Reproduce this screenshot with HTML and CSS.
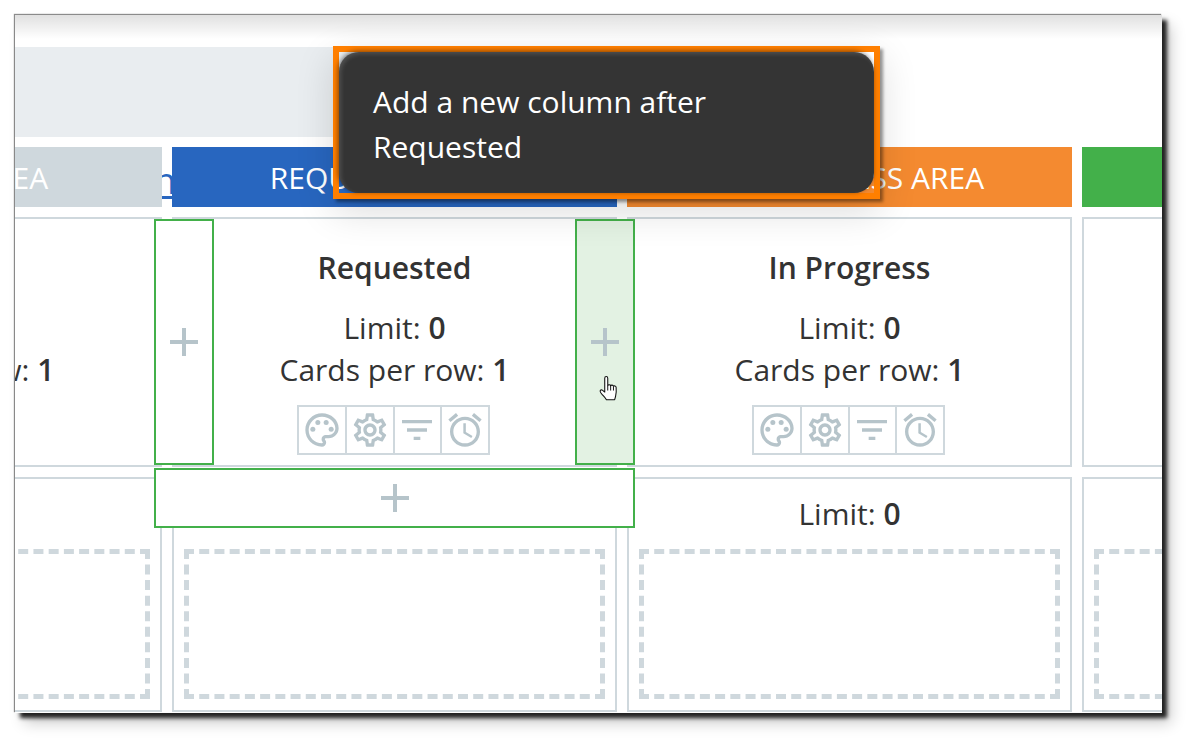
FILE: index.html
```html
<!DOCTYPE html>
<html lang="en">
<head>
<meta charset="utf-8">
<title>Board editor</title>
<link rel="stylesheet" href="styles.css">
</head>
<body>
<svg class="defs" width="0" height="0" aria-hidden="true">
  <symbol id="i-palette" viewBox="0 0 24 24"><path d="M12 22C6.49 22 2 17.51 2 12S6.49 2 12 2s10 4.04 10 9c0 3.31-2.69 6-6 6h-1.77c-.28 0-.5.22-.5.5 0 .12.05.23.13.33.41.47.64 1.06.64 1.67A2.5 2.5 0 0 1 12 22zm0-18c-4.41 0-8 3.59-8 8s3.59 8 8 8c.28 0 .5-.22.5-.5a.54.54 0 0 0-.14-.35c-.41-.46-.63-1.05-.63-1.65a2.5 2.5 0 0 1 2.5-2.5H16c2.21 0 4-1.79 4-4 0-3.86-3.59-7-8-7z"/><circle cx="6.5" cy="11.5" r="1.5"/><circle cx="9.5" cy="7.5" r="1.5"/><circle cx="14.5" cy="7.5" r="1.5"/><circle cx="17.5" cy="11.5" r="1.5"/></symbol>
  <symbol id="i-gear" viewBox="0 0 24 24"><path d="M19.43 12.98c.04-.32.07-.64.07-.98 0-.34-.03-.66-.07-.98l2.11-1.65c.19-.15.24-.42.12-.64l-2-3.46c-.09-.16-.26-.25-.44-.25-.06 0-.12.01-.17.03l-2.49 1c-.52-.4-1.08-.73-1.69-.98l-.38-2.65C14.46 2.18 14.25 2 14 2h-4c-.25 0-.46.18-.49.42l-.38 2.65c-.61.25-1.17.59-1.69.98l-2.49-1c-.06-.02-.12-.03-.18-.03-.17 0-.34.09-.43.25l-2 3.46c-.13.22-.07.49.12.64l2.11 1.65c-.04.32-.07.65-.07.98 0 .33.03.66.07.98l-2.11 1.65c-.19.15-.24.42-.12.64l2 3.46c.09.16.26.25.44.25.06 0 .12-.01.17-.03l2.49-1c.52.4 1.08.73 1.69.98l.38 2.65c.03.24.24.42.49.42h4c.25 0 .46-.18.49-.42l.38-2.65c.61-.25 1.17-.59 1.69-.98l2.49 1c.06.02.12.03.18.03.17 0 .34-.09.43-.25l2-3.46c.12-.22.07-.49-.12-.64l-2.11-1.65zm-1.98-1.71c.04.31.05.52.05.73 0 .21-.02.43-.05.73l-.14 1.13.89.7 1.08.84-.7 1.21-1.27-.51-1.04-.42-.9.68c-.43.32-.84.56-1.25.73l-1.06.43-.16 1.13-.2 1.35h-1.4l-.19-1.35-.16-1.13-1.06-.43c-.43-.18-.83-.41-1.23-.71l-.91-.7-1.06.43-1.27.51-.7-1.21 1.08-.84.89-.7-.14-1.13c-.03-.31-.05-.54-.05-.74s.02-.43.05-.73l.14-1.13-.89-.7-1.08-.84.7-1.21 1.27.51 1.04.42.9-.68c.43-.32.84-.56 1.25-.73l1.06-.43.16-1.13.2-1.35h1.39l.19 1.35.16 1.13 1.06.43c.43.18.83.41 1.23.71l.91.7 1.06-.43 1.27-.51.7 1.21-1.07.85-.89.7.14 1.13zM12 8c-2.21 0-4 1.79-4 4s1.79 4 4 4 4-1.79 4-4-1.79-4-4-4zm0 6c-1.1 0-2-.9-2-2s.9-2 2-2 2 .9 2 2-.9 2-2 2z"/></symbol>
  <symbol id="i-filter" viewBox="0 0 24 24"><path d="M10 18h4v-2h-4v2zM3 6v2h18V6H3zm3 7h12v-2H6v2z"/></symbol>
  <symbol id="i-alarm" viewBox="0 0 24 24"><path d="M22 5.72l-4.6-3.86-1.29 1.53 4.6 3.86L22 5.72zM7.88 3.39L6.6 1.86 2 5.71l1.29 1.53 4.59-3.85zM12.5 8H11v6l4.75 2.85.75-1.23-4-2.37V8zM12 4c-4.97 0-9 4.03-9 9s4.03 9 9 9 9-4.03 9-9-4.03-9-9-9zm0 16c-3.87 0-7-3.13-7-7s3.13-7 7-7 7 3.13 7 7-3.13 7-7 7z"/></symbol>
  <symbol id="i-plus" viewBox="0 0 28 28"><path d="M12 0h4v12h12v4H16v12h-4V16H0v-4h12z"/></symbol>
</svg>

<main class="frame">
  <div class="band"></div>

  <a class="stray-link" href="#">n</a>

  <div class="board">
    <div class="area area-grey">BACKLOG AREA</div>
    <div class="area area-blue">REQUESTED AREA</div>
    <div class="area area-orange">IN PROGRESS AREA</div>
    <div class="area area-green">DONE AREA</div>

    <section class="card">
      <h3 class="card-title">Backlog</h3>
      <p class="stat">Limit: <b>0</b></p>
      <p class="stat">Cards per row: <b>1</b></p>
      <div class="tools">
        <span class="tool"><svg class="tool-icon"><use href="#i-palette"/></svg></span>
        <span class="tool"><svg class="tool-icon"><use href="#i-gear"/></svg></span>
        <span class="tool"><svg class="tool-icon"><use href="#i-filter"/></svg></span>
      </div>
    </section>
    <section class="card">
      <h3 class="card-title">Requested</h3>
      <p class="stat">Limit: <b>0</b></p>
      <p class="stat">Cards per row: <b>1</b></p>
      <div class="tools">
        <span class="tool"><svg class="tool-icon"><use href="#i-palette"/></svg></span>
        <span class="tool"><svg class="tool-icon"><use href="#i-gear"/></svg></span>
        <span class="tool"><svg class="tool-icon"><use href="#i-filter"/></svg></span>
        <span class="tool"><svg class="tool-icon"><use href="#i-alarm"/></svg></span>
      </div>
    </section>
    <section class="card">
      <h3 class="card-title">In Progress</h3>
      <p class="stat">Limit: <b>0</b></p>
      <p class="stat">Cards per row: <b>1</b></p>
      <div class="tools">
        <span class="tool"><svg class="tool-icon"><use href="#i-palette"/></svg></span>
        <span class="tool"><svg class="tool-icon"><use href="#i-gear"/></svg></span>
        <span class="tool"><svg class="tool-icon"><use href="#i-filter"/></svg></span>
        <span class="tool"><svg class="tool-icon"><use href="#i-alarm"/></svg></span>
      </div>
    </section>
    <section class="card"></section>

    <section class="lane"><p class="stat">Limit: <b>0</b></p><div class="drop"></div></section>
    <section class="lane"><p class="stat">Limit: <b>0</b></p><div class="drop"></div></section>
    <section class="lane"><p class="stat">Limit: <b>0</b></p><div class="drop"></div></section>
    <section class="lane"><p class="stat">Limit: <b>0</b></p><div class="drop"></div></section>
  </div>

  <div class="add add-before"><svg class="plus"><use href="#i-plus"/></svg></div>
  <div class="add add-after"><svg class="plus"><use href="#i-plus"/></svg></div>
  <div class="add add-below"><svg class="plus"><use href="#i-plus"/></svg></div>

  <svg class="hand" viewBox="0 0 17 26">
    <path d="M5 2.2C5 1 5.7.5 6.4.5S7.800 1 7.800 2.200V9c.2-1 2.400-1.200 2.700.1.4-.9 2.300-.9 2.600.4.6-.6 2.400-.4 2.500 1.100.2 2.500.2 5.400-.5 8-.3 1.300-.6 2.300-.9 3.400H6.600C5.700 20.500 4.500 19.200 3.200 17.800 2.300 16.800 1 15.500.8 14.400.6 13.200 1.800 12.500 2.800 13.100L5 14.900z" fill="#fff" stroke="#111" stroke-width="1" stroke-linejoin="round"/>
    <path d="M7.800 9v4.500M10.500 9.100v4.400M13.100 9.500v4" fill="none" stroke="#111" stroke-width=".9"/>
  </svg>

  <div class="tip">
    <div class="tip-bubble">Add a new column after<br>Requested</div>
  </div>
</main>
</body>
</html>
```

FILE: styles.css
```css
* { box-sizing: border-box; }
html, body { margin: 0; height: 100%; background: #fff; overflow: hidden; }
body { font-family: "Open Sans", "Noto Sans", sans-serif; color: #333; }
.defs { position: absolute; }

.frame {
  position: relative;
  width: 1147px;
  height: 698px;
  margin: 15px 0 0 15px;
  padding-top: 32px;
  background: #fff;
  overflow: hidden;
}
body::before {
  content: "";
  position: absolute;
  left: 15px;
  top: 15px;
  width: 1147px;
  height: 698px;
  box-shadow: -1px -1px 1px rgba(0,0,0,.45), 5px 5px 4px #222, 9px 10px 14px rgba(0,0,0,.2);
}
.frame::before {
  content: "";
  position: absolute;
  left: 0;
  right: 0;
  top: 0;
  height: 24px;
  background: linear-gradient(to bottom, rgba(0,0,0,.12), rgba(0,0,0,0));
}

.band { width: 700px; height: 90px; margin-bottom: 10px; background: #e9edf0; }

.board {
  display: grid;
  grid-template-columns: repeat(4, 445px);
  grid-template-rows: 60px 250px 235px;
  column-gap: 10px;
  row-gap: 10px;
  margin-left: -298px;
}

.area {
  position: relative;
  z-index: 1;
  display: flex;
  align-items: center;
  justify-content: center;
  color: #fff;
  font-size: 30px;
}
.area-grey { background: #cfd8dd; }
.area-blue { background: #2866bf; }
.area-orange { background: #f48a30; }
.area-green { background: #43b04a; }

.stray-link {
  position: absolute;
  left: 139px;
  top: 144px;
  font-size: 36px;
  line-height: 44px;
  color: #2866bf;
}

.card, .lane {
  border: 2px solid #cfd8dd;
  text-align: center;
  font-size: 30px;
}
.card { padding-top: 28px; }
.lane { padding: 14px 10px 11px; display: flex; flex-direction: column; }

.card-title { margin: 0 0 18px; font-size: 30px; line-height: 42px; font-weight: 600; }
.stat { margin: 0; line-height: 42px; }
.stat b { font-weight: 600; }

.tools { display: flex; justify-content: center; margin-top: 14px; }
.tool {
  display: flex;
  align-items: center;
  justify-content: center;
  width: 49.7px;
  height: 50px;
  margin-left: -2px;
  border: 2px solid #cfd8dd;
}
.tool-icon { flex: none; width: 40px; height: 40px; fill: #b6c4ca; }

.drop { flex: 1; margin-top: 14px; border: 5px dashed #cfd8dd; }

.add {
  position: absolute;
  z-index: 2;
  display: flex;
  align-items: center;
  justify-content: center;
  border: 2px solid #43b04a;
  background: #fff;
}
.add-before { left: 139px; top: 204px; width: 60px; height: 246px; }
.add-after { left: 560px; top: 204px; width: 60px; height: 246px; background: #e3f2e3; }
.add-below { left: 139px; top: 453px; width: 481px; height: 60px; }
.plus { width: 28px; height: 28px; fill: #b6c4ca; }

.hand { position: absolute; z-index: 3; left: 584px; top: 361px; width: 19px; height: 28px; }

.tip {
  position: absolute;
  z-index: 4;
  left: 318px;
  top: 31px;
  width: 547px;
  height: 153px;
  border: 6px solid #ff7f00;
  box-shadow: 3px 3px 3px rgba(0,0,0,.4), 0 12px 36px rgba(0,0,0,.14);
}
.tip-bubble {
  height: 100%;
  padding: 27px 34px 0;
  border-radius: 20px;
  background: #343434;
  box-shadow: -1px -1px 5px rgba(0,0,0,.5), inset 2px 2px 4px rgba(255,255,255,.14);
  color: #fff;
  font-size: 30px;
  line-height: 45px;
}
```
